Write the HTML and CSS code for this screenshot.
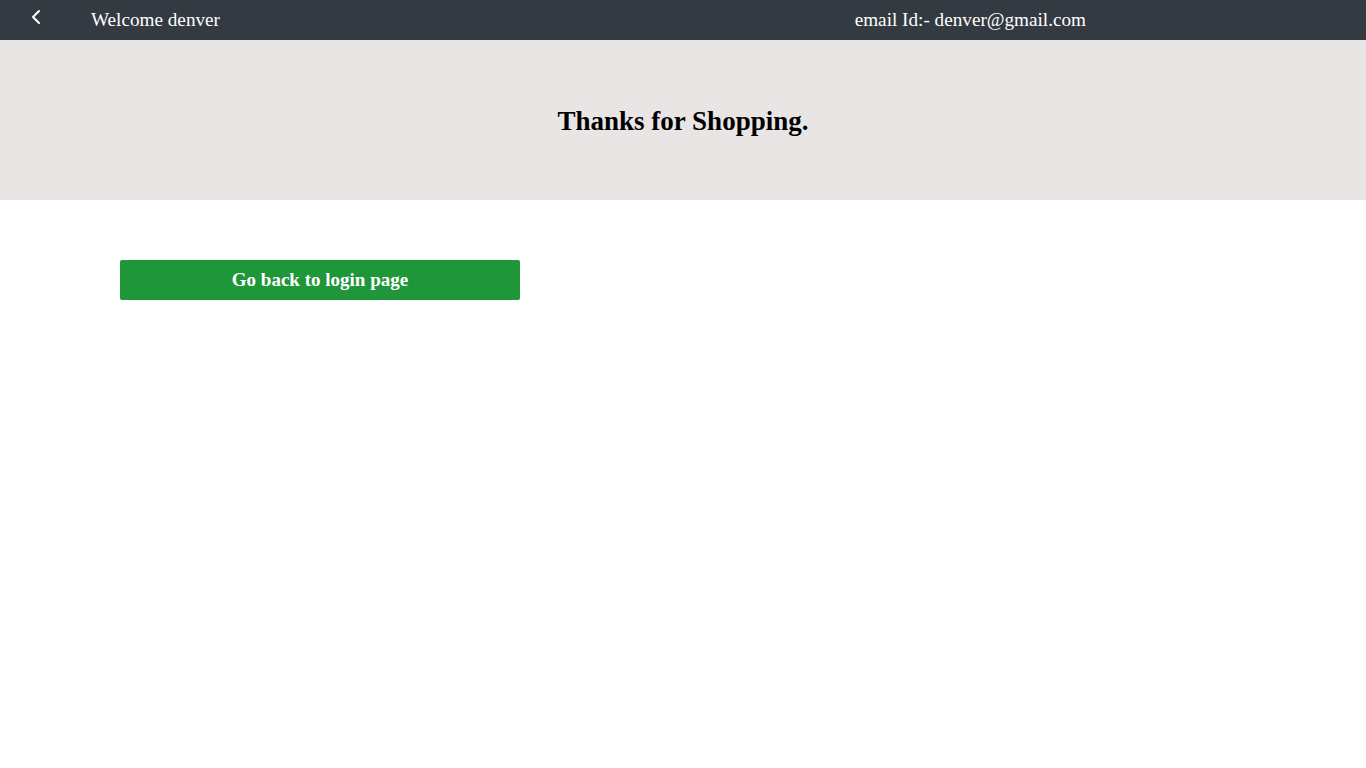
FILE: index.html
```html
<!DOCTYPE html>
<html>
<head>
<meta charset="utf-8">
<link rel="stylesheet" href="styles.css">
</head>
<body>
<header class="topbar">
  <a class="back" href="#"><svg width="12" height="16" viewBox="0 0 12 16"><path d="M9 2 L3 8 L9 14" fill="none" stroke="#fff" stroke-width="2" stroke-linecap="round" stroke-linejoin="round"/></svg></a>
  <span class="welcome">Welcome denver</span>
  <span class="email">email Id:- denver@gmail.com</span>
</header>
<section class="banner">
  <h1>Thanks for Shopping.</h1>
</section>
<main class="content">
  <button class="login-btn">Go back to login page</button>
</main>
</body>
</html>
```
FILE: styles.css
```css
html, body {
  margin: 0;
  padding: 0;
  background: #fff;
  font-family: "Liberation Serif", "Times New Roman", serif;
}
.topbar {
  height: 40px;
  background: #343a42;
  display: flex;
  align-items: center;
  color: #fff;
  font-size: 19.2px;
}
.back {
  display: flex;
  margin-left: 30px;
  margin-top: -6px;
  width: 12px;
}
.welcome {
  margin-left: 49px;
}
.email {
  margin-left: auto;
  margin-right: 280px;
}
.banner {
  height: 160px;
  background: #e9e5e5;
  display: flex;
  align-items: center;
  justify-content: center;
}
.banner h1 {
  margin: 2px 0 0;
  font-size: 27px;
  font-weight: bold;
  color: #000;
}
.content {
  padding: 60px 120px;
}
.login-btn {
  width: 400px;
  height: 40px;
  background: #1f9639;
  color: #fff;
  border: none;
  border-radius: 2px;
  font-family: "Liberation Serif", "Times New Roman", serif;
  font-size: 19px;
  font-weight: bold;
  padding: 0;
  display: block;
}
```
